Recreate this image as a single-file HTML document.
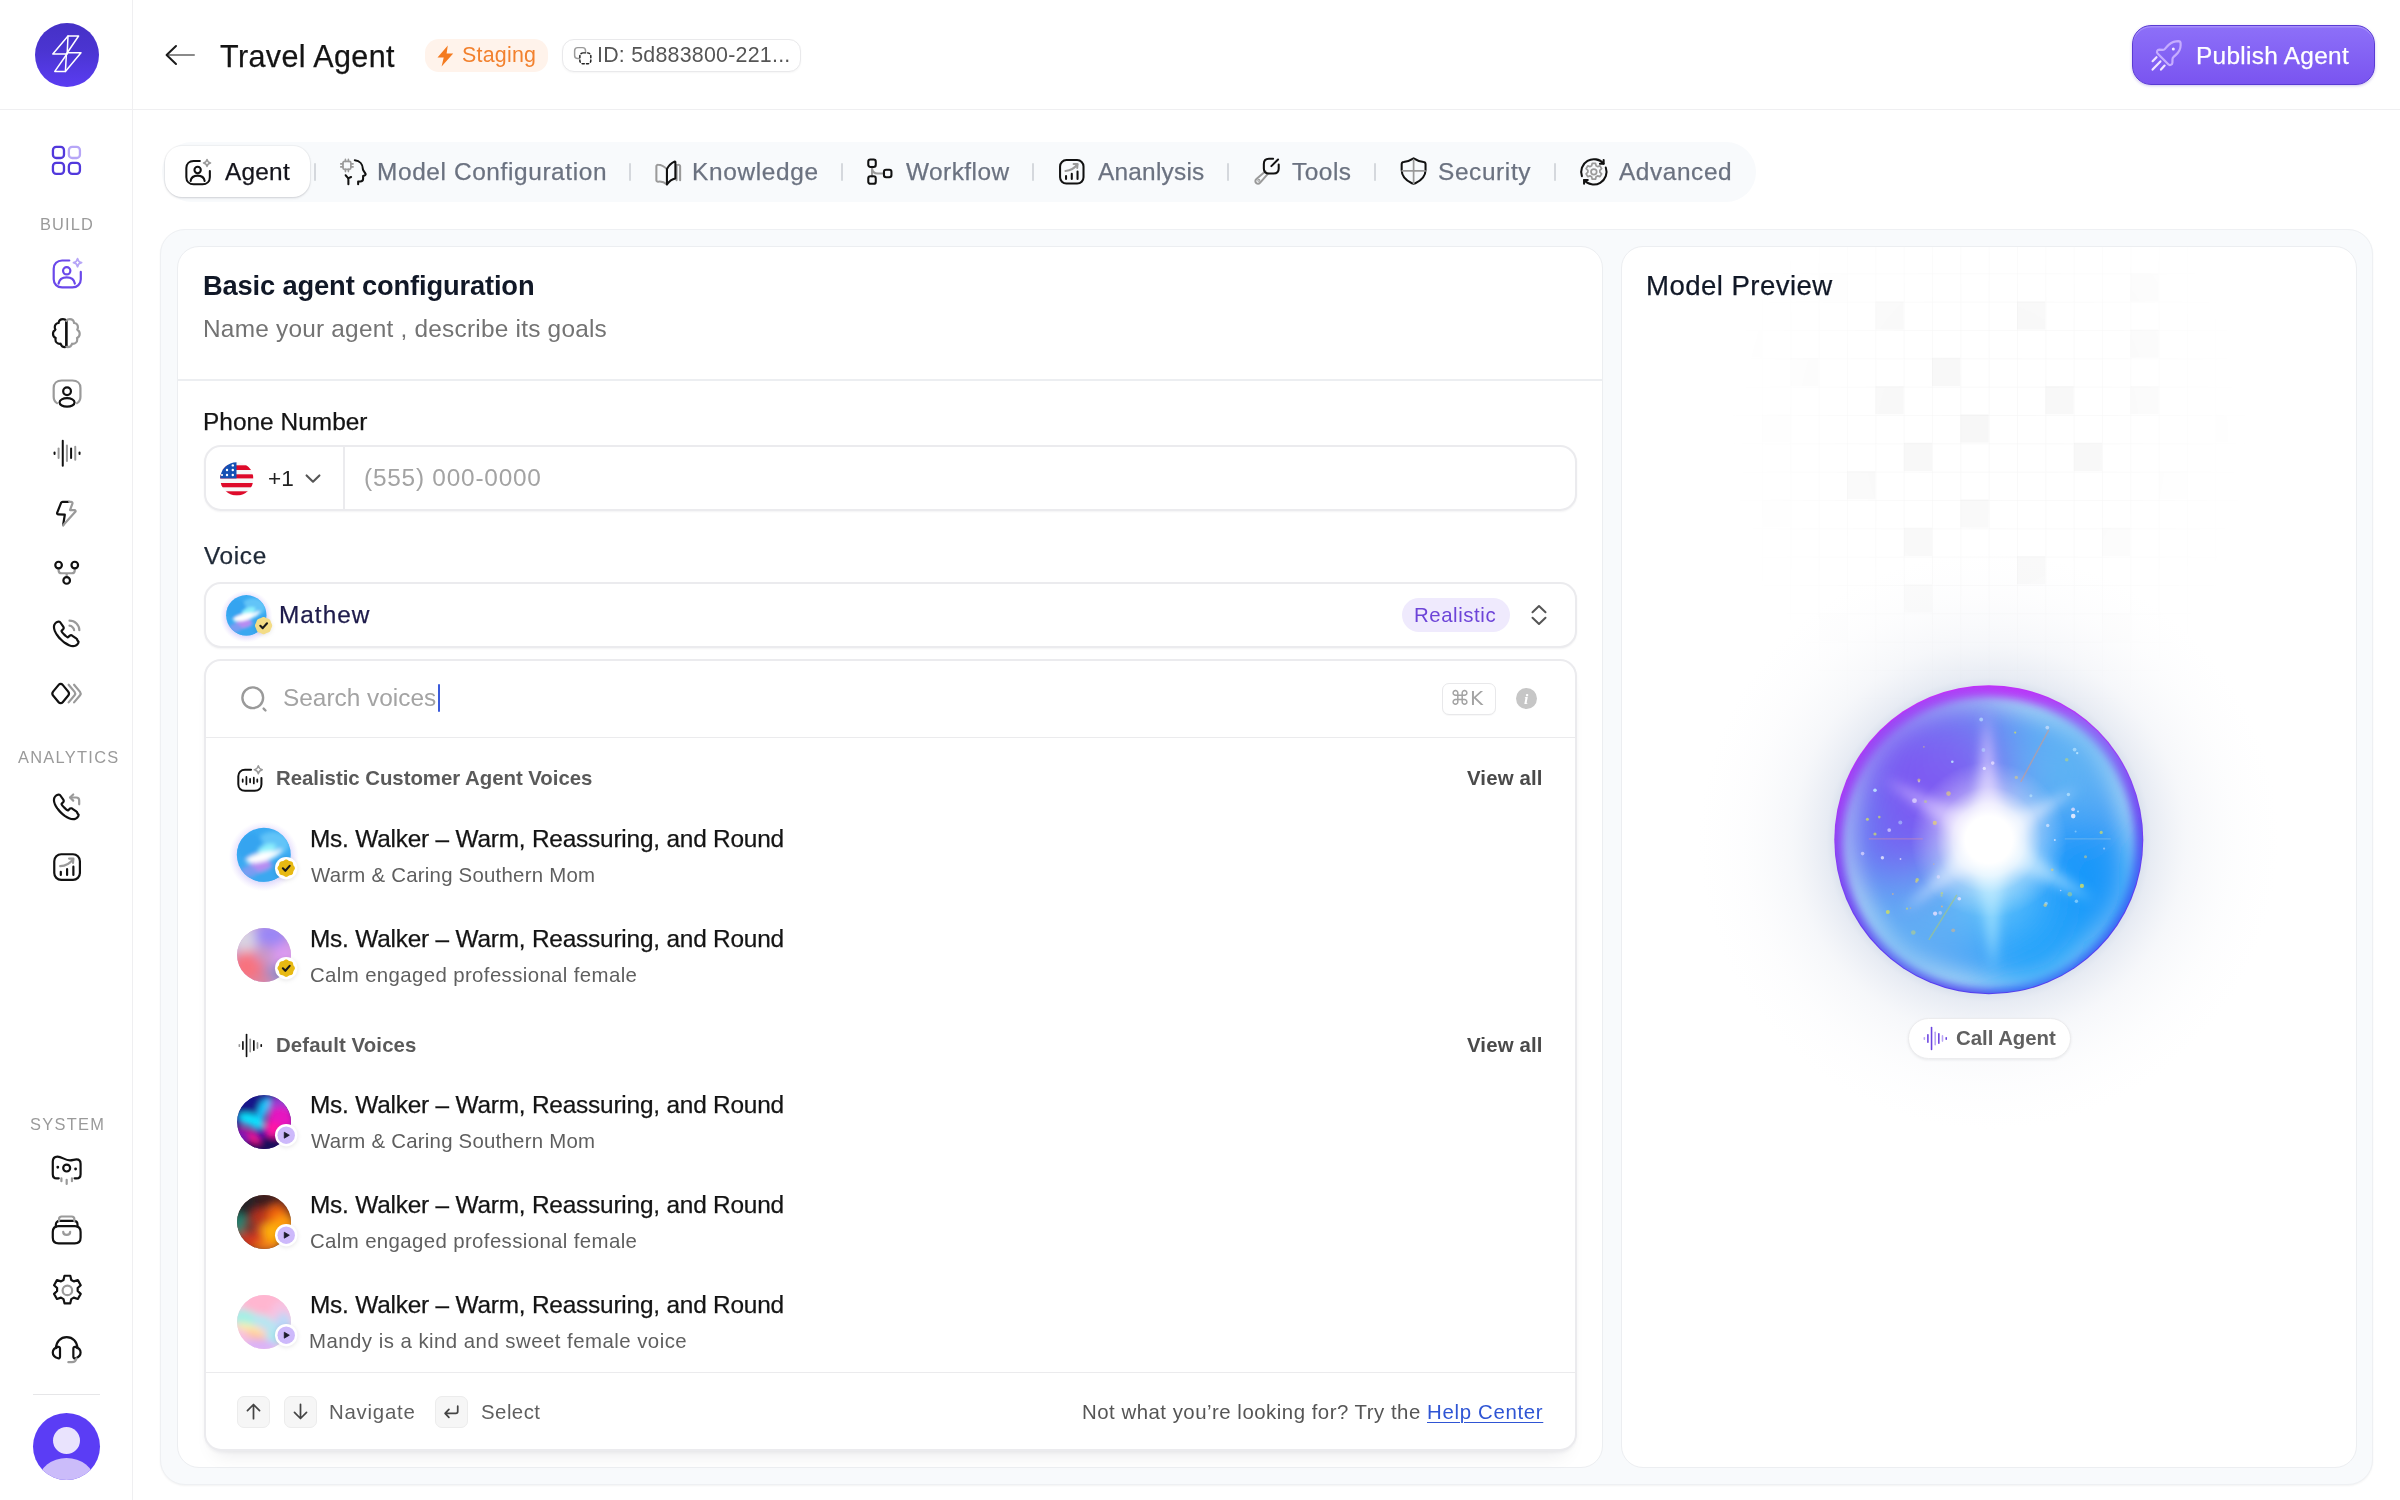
<!DOCTYPE html>
<html lang="en">
<head>
<meta charset="utf-8">
<title>Travel Agent</title>
<style>
*{box-sizing:border-box;margin:0;padding:0}
html,body{width:2400px;height:1500px;overflow:hidden;background:#fff}
body{position:relative;font-family:"Liberation Sans",sans-serif;-webkit-font-smoothing:antialiased}
.b{position:absolute}
.ic{position:absolute;overflow:visible}
.t{position:absolute;white-space:nowrap;line-height:1;display:block;will-change:transform}
</style>
</head>
<body>
<div class="b" style="left:0.0px;top:108.5px;width:2400.0px;height:1.8px;background:#efeff1"></div>
<div class="b" style="left:131.6px;top:0.0px;width:1.8px;height:1500.0px;background:#efeff1"></div>
<nav>
<div class="b" style="left:34.8px;top:22.8px;width:64.0px;height:64.0px;border-radius:50%;background:linear-gradient(180deg,#4531c6 0%,#4b35d2 45%,#5a3cf2 100%);"></div>
<svg class="ic" style="left:34.800px;top:22.800px" width="64" height="64" viewBox="34.800 22.800 64 64" fill="none" stroke="#fff" stroke-width="1.5" stroke-linejoin="round" stroke-linecap="round"><path d="M67.800 35.800H78.400L66.200 53.800H52.600z"/><path d="M67.600 52.600H80.800L65.200 71.200H54.600z"/><path d="M67.800 35.800L67 53.400M66.200 53.800L65.200 71.200"/></svg>
<svg class="ic" style="left:51.37px;top:144.67px" width="30.86" height="30.86" viewBox="0 0 24 24" fill="none" stroke="#5138dc" stroke-width="1.789" stroke-linecap="round" stroke-linejoin="round"><rect x="1.5" y="1.5" width="8.6" height="8.6" rx="2.6"/><rect x="13.9" y="1.5" width="8.6" height="8.6" rx="2.6" stroke="#b7a6f7"/><rect x="1.5" y="13.9" width="8.6" height="8.6" rx="2.6"/><rect x="13.9" y="13.9" width="8.6" height="8.6" rx="2.6"/></svg>
<span class="t" id="sb1" style="left:40px;top:216px;font-size:16.4px;letter-spacing:1.115px;color:#9a9a9a;">BUILD</span>
<svg class="ic" style="left:50.59px;top:256.77px" width="32.50" height="32.50" viewBox="0 0 24 24" fill="none" stroke="#6a48ea" stroke-width="1.624" stroke-linecap="round" stroke-linejoin="round"><path d="M13.5 2.6H8.2C4.6 2.6 2 5 2 8.6v7.8C2 20 4.6 22.4 8.2 22.4h7.6c3.6 0 6.2-2.4 6.2-6V11"/><circle cx="11.6" cy="10.2" r="2.7"/><path d="M5.6 19.6c.5-3 2.9-4.6 6-4.6s5.5 1.600 6 4.600"/><path d="M19.600 1.200c.35 1.900 1.100 2.650 3 3-1.900.35-2.650 1.100-3 3-.35-1.900-1.100-2.650-3-3 1.900-.35 2.650-1.100 3-3z" stroke="#b7a6f7" stroke-width="1.3"/></svg>
<svg class="ic" style="left:50.26px;top:317.16px" width="32.69" height="32.69" viewBox="0 0 24 24" fill="none" stroke="#111" stroke-width="1.615" stroke-linecap="round" stroke-linejoin="round"><path d="M12 2.900c-.5-.8-1.400-1.300-2.500-1.300-1.700 0-3 1.200-3.200 2.800-1.600.2-2.800 1.500-2.800 3.200 0 .6.200 1.200.5 1.700-1.100.6-1.800 1.700-1.800 3 0 1.400.8 2.600 2 3.100-.1.300-.2.700-.2 1.100 0 1.800 1.400 3.200 3.200 3.200.2 0 .4 0 .6-.1.400 1.500 1.700 2.500 3.200 2.500.4 0 .7-.1 1-.2z"/><path d="M12 2.900v19"/><path d="M12 2.900c.5-.8 1.400-1.300 2.500-1.300 1.700 0 3 1.200 3.200 2.800 1.600.2 2.800 1.500 2.800 3.200 0 .6-.2 1.200-.5 1.700 1.100.6 1.800 1.700 1.800 3 0 1.400-.8 2.600-2 3.100.1.300.2.700.2 1.100 0 1.800-1.400 3.200-3.200 3.200-.2 0-.4 0-.6-.1-.4 1.500-1.700 2.500-3.200 2.500-.4 0-.7-.1-1-.2" stroke="#9a9a9a"/></svg>
<svg class="ic" style="left:50.74px;top:376.71px" width="32.11" height="32.11" viewBox="0 0 24 24" fill="none" stroke="#111" stroke-width="1.644" stroke-linecap="round" stroke-linejoin="round"><path d="M4.500 19.500C2.900 18.600 2 16.900 2 14.800V8.200C2 4.800 4.400 2.600 8 2.600h8c3.600 0 6 2.200 6 5.600v6.600c0 2.100-.9 3.800-2.500 4.700" stroke="#9a9a9a"/><circle cx="12" cy="10.600" r="2.900"/><ellipse cx="12" cy="19" rx="5.600" ry="3.200"/></svg>
<svg class="ic" style="left:52.75px;top:438.91px" width="28.57" height="28.57" viewBox="0 0 24 24" fill="none" stroke="#111" stroke-width="1.680" stroke-linecap="round" stroke-linejoin="round"><path d="M1.300 11.300v1.400"/><path d="M4.700 8v8" stroke="#9a9a9a"/><path d="M8.200 1.500v21"/><path d="M11.700 5.500v13" stroke="#9a9a9a"/><path d="M15.200 8v8"/><path d="M18.700 6.500v11" stroke="#9a9a9a"/><path d="M22.300 11.300v1.400"/></svg>
<svg class="ic" style="left:52.36px;top:498.69px" width="29.01" height="29.01" viewBox="0 0 24 24" fill="none" stroke="#111" stroke-width="1.820" stroke-linecap="round" stroke-linejoin="round"><path d="M14.200 2.300c-1.800 0-4.400 0-5.400 0-.6 0-1 .3-1.300.900L4.300 11.300c-.3.800.2 1.500 1 1.500l5.300.2-1.400 8.700"/><path d="M9.200 21.700L19.300 10.600c.5-.6.100-1.400-.7-1.400h-3.700l2-5.400c.3-.8-.300-1.500-1.100-1.500h-1.600" stroke="#9a9a9a"/></svg>
<svg class="ic" style="left:53.12px;top:559.36px" width="27.36" height="27.36" viewBox="0 0 24 24" fill="none" stroke="#111" stroke-width="1.930" stroke-linecap="round" stroke-linejoin="round"><path d="M4.900 8.300v1.500c0 1.700 1 2.700 2.700 2.700h8.800c1.700 0 2.700-1 2.700-2.700V8.300M12 12.500v3.300" stroke="#9a9a9a"/><circle cx="4.900" cy="5.300" r="2.900"/><circle cx="19.100" cy="5.300" r="2.900"/><circle cx="12" cy="18.800" r="2.900"/></svg>
<svg class="ic" style="left:53.35px;top:619.59px" width="28.49" height="28.49" viewBox="0 0 24 24" fill="none" stroke="#111" stroke-width="1.854" stroke-linecap="round" stroke-linejoin="round"><path d="M21.500 18.300c0 .4-.1.700-.2 1.100-.2.400-.4.700-.7 1-.5.600-1.100 1-1.700 1.200-.6.300-1.300.4-2 .4-1.100 0-2.200-.3-3.400-.8s-2.400-1.200-3.600-2c-1.200-.9-2.300-1.800-3.400-2.900C5.400 15.200 4.500 14 3.600 12.900c-.8-1.200-1.500-2.400-2-3.500C1.100 8.200.8 7 .8 6c0-.7.100-1.400.4-2 .2-.6.600-1.200 1.200-1.700C3.100 1.600 3.800 1.300 4.600 1.300c.3 0 .6.100.9.200.3.100.5.300.7.600l2.300 3.300c.2.300.3.500.4.700.1.200.1.400.1.600 0 .200-.1.500-.2.700-.1.200-.3.500-.6.700l-.8.800c-.1.100-.2.200-.2.400 0 .1 0 .2.100.3.100.3.400.7.800 1.200.4.500.9 1 1.400 1.500.5.500 1 1 1.500 1.400.5.400.9.700 1.200.8.100 0 .2.100.3.100.2 0 .3-.1.400-.2l.8-.8c.3-.3.500-.5.700-.6.200-.1.500-.2.700-.2.200 0 .400 0 .6.100.2.100.5.200.7.400l3.400 2.400c.3.200.4.400.5.600.100.300.200.500.200.800z"/><path d="M17.800 8.600c0-.7-.5-1.700-1.300-2.500-.7-.8-1.700-1.300-2.600-1.300" stroke="#9a9a9a"/><path d="M22.200 8.600c0-4.400-3.600-8-8.300-8" stroke="#9a9a9a"/></svg>
<svg class="ic" style="left:51.30px;top:677.75px" width="31.11" height="31.11" viewBox="0 0 24 24" fill="none" stroke="#111" stroke-width="1.697" stroke-linecap="round" stroke-linejoin="round"><path d="M9 5.300L13.300 10.500c.7.900.7 2.100 0 3L9 18.700c-.8 1-2.300 1-3.100 0L1.600 13.500c-.7-.9-.7-2.100 0-3L5.900 5.300c.8-1 2.300-1 3.100 0z"/><path d="M13.600 5.200l4.600 5.500c.6.800.6 1.800 0 2.600l-4.600 5.500" stroke="#9a9a9a"/><path d="M17.800 5.200l4.600 5.500c.6.800.6 1.800 0 2.600l-4.600 5.500" stroke="#9a9a9a"/></svg>
<span class="t" id="sb2" style="left:18px;top:749px;font-size:16.4px;letter-spacing:1.296px;color:#9a9a9a;">ANALYTICS</span>
<svg class="ic" style="left:53.23px;top:792.59px" width="28.57" height="28.57" viewBox="0 0 24 24" fill="none" stroke="#111" stroke-width="1.848" stroke-linecap="round" stroke-linejoin="round"><path d="M21.500 18.300c0 .4-.1.700-.2 1.100-.2.400-.4.700-.7 1-.5.600-1.100 1-1.700 1.200-.6.300-1.300.4-2 .4-1.100 0-2.200-.3-3.400-.8s-2.400-1.200-3.600-2c-1.200-.9-2.300-1.800-3.400-2.900C5.400 15.200 4.500 14 3.600 12.900c-.8-1.200-1.500-2.400-2-3.500C1.100 8.200.8 7 .8 6c0-.7.100-1.400.4-2 .2-.6.600-1.200 1.200-1.700C3.100 1.600 3.800 1.300 4.600 1.300c.3 0 .6.100.9.200.3.100.5.300.7.600l2.300 3.300c.2.300.3.500.4.700.1.200.1.400.1.600 0 .200-.1.500-.2.700-.1.200-.3.500-.6.700l-.8.800c-.1.100-.2.200-.2.400 0 .1 0 .2.100.3.100.3.400.7.800 1.200.4.500.9 1 1.400 1.500.5.500 1 1 1.500 1.400.5.400.9.700 1.200.8.100 0 .2.100.3.100.2 0 .3-.1.400-.2l.8-.8c.3-.3.500-.5.700-.6.200-.1.500-.2.700-.2.200 0 .400 0 .6.100.2.100.5.200.7.400l3.400 2.400c.3.200.4.400.5.600.100.300.200.500.200.800z"/><path d="M22 9.500V6.300c0-1.400-1.100-2.500-2.500-2.500H14.500" stroke="#9a9a9a"/><path d="M17 1.200l-2.700 2.600L17 6.400" stroke="#9a9a9a"/></svg>
<svg class="ic" style="left:51.81px;top:851.66px" width="30.18" height="30.18" viewBox="0 0 24 24" fill="none" stroke="#111" stroke-width="1.750" stroke-linecap="round" stroke-linejoin="round"><rect x="1.800" y="1.800" width="20.400" height="20.400" rx="5.500"/><path d="M7 18.300v-2.600M12 18.300v-4.600M17 18.300v-6.600"/><path d="M6.500 11.300c4.200-.3 8-2.400 10.300-5.700" stroke="#9a9a9a"/><path d="M13.600 5.200l3.400.1-.300 3.300" stroke="#9a9a9a"/></svg>
<span class="t" id="sb3" style="left:30px;top:1116px;font-size:16.4px;letter-spacing:1.290px;color:#9a9a9a;">SYSTEM</span>
<svg class="ic" style="left:50.11px;top:1152.69px" width="33.37" height="33.37" viewBox="0 0 24 24" fill="none" stroke="#111" stroke-width="1.582" stroke-linecap="round" stroke-linejoin="round"><path d="M6.300 18.200c-.4 0-.9 0-1.400 0C3.100 18.200 2 17 2 15.200V6.200C2 4 3.300 2.600 5.400 2.600c3.200 0 5.200 2.700 9 2.700 2 0 3-.7 4.600-.7 1.800 0 3 1.300 3 3.200v7.400c0 1.800-1.100 3-2.900 3-.5 0-.9 0-1.400 0"/><circle cx="12" cy="10.800" r="2.500"/><path d="M5.600 10.100v.2M18.400 11.400v.2" stroke-width="2"/><path d="M8.200 18.300v2M12 19.300v3M15.800 18.300v2" stroke="#9a9a9a"/></svg>
<svg class="ic" style="left:50.11px;top:1212.83px" width="33.39" height="33.39" viewBox="0 0 24 24" fill="none" stroke="#111" stroke-width="1.581" stroke-linecap="round" stroke-linejoin="round"><path d="M6.200 9.500h11.600c2.600 0 4.200 1.600 4.200 4.200v4c0 2.600-1.600 4.200-4.200 4.200H6.200C3.600 21.900 2 20.300 2 17.700v-4c0-2.600 1.600-4.200 4.200-4.200z"/><path d="M4.200 10V8.400c0-1.600 1-2.700 2.700-2.700h10.200c1.700 0 2.700 1.100 2.700 2.700V10"/><path d="M6.500 5.700V4.400c0-1.100.8-1.900 1.900-1.900h7.200c1.100 0 1.900.8 1.900 1.900v1.300" stroke="#9a9a9a"/><path d="M9.500 13.500c0 1.400 1.100 2.300 2.500 2.300s2.500-.900 2.500-2.300" stroke="#9a9a9a"/></svg>
<svg class="ic" style="left:49.51px;top:1273.38px" width="34.79" height="34.79" viewBox="0 0 24 24" fill="none" stroke="#111" stroke-width="1.518" stroke-linecap="round" stroke-linejoin="round"><circle cx="12" cy="12" r="3.300" stroke="#9a9a9a"/><path d="M10 1.900h4l.7 2.900 1.700 1 2.800-.9 2 3.500-2.100 2v2l2.100 2-2 3.500-2.800-.9-1.700 1-.7 2.900h-4l-.7-2.900-1.700-1-2.800.9-2-3.500 2.100-2v-2l-2.100-2 2-3.500 2.800.9 1.700-1z" stroke-linejoin="round"/></svg>
<svg class="ic" style="left:50.11px;top:1332.34px" width="33.37" height="33.37" viewBox="0 0 24 24" fill="none" stroke="#111" stroke-width="1.582" stroke-linecap="round" stroke-linejoin="round"><path d="M4.3 11.6C4.4 7 7.6 3.7 12 3.7s7.600 3.300 7.700 7.900"/><path d="M5.8 10.7c-2.200.6-3.800 2.200-3.800 4.100s1.600 3.500 3.800 4.100c.7.200 1.400-.3 1.400-1.100v-6c0-.8-.7-1.300-1.400-1.100zM18.200 10.700c2.200.6 3.800 2.200 3.800 4.100s-1.600 3.500-3.800 4.100c-.7.200-1.400-.3-1.400-1.100v-6c0-.8.700-1.300 1.400-1.100z"/><path d="M19 18.900c0 1.700-1.400 2.800-3.200 2.800h-2.600" stroke="#9a9a9a"/></svg>
<div class="b" style="left:33.0px;top:1393.5px;width:67.0px;height:1.0px;background:#e6e6e8"></div>
<div class="b" style="left:33.0px;top:1413.0px;width:67.0px;height:67.0px;border-radius:50%;background:#5b3df5;overflow:hidden;"><div style="position:absolute;left:19.500px;top:13.500px;width:27px;height:27px;border-radius:50%;background:#e9e3fd"></div><div style="position:absolute;left:6px;top:45px;width:55px;height:44px;border-radius:50%;background:#cbbcfa"></div></div>
</nav>
<header>
<svg class="ic" style="left:160px;top:40px" width="40" height="30" viewBox="160 40 40 30" fill="none" stroke-linecap="round" stroke-linejoin="round" stroke-width="2"><path d="M168.500 55H194" stroke="#8a8a8a"/><path d="M176 46L166.600 55L176 64" stroke="#1a1a1a"/></svg>
<span class="t" id="h1" style="left:220px;top:41px;font-size:30.5px;letter-spacing:0.407px;color:#141414;-webkit-text-stroke:0.25px currentColor;">Travel Agent</span>
<div class="b" style="left:425.0px;top:38.5px;width:123.0px;height:33.0px;border-radius:14px;background:#fff3eb;"></div>
<svg class="ic" style="left:435.500px;top:44.500px" width="19" height="22" viewBox="0 0 19 22"><path d="M11.800 0.500L1.500 12.400h6.200L5.600 21.500l11.600-13H10.600z" fill="#f47b20"/></svg>
<span class="t" id="h2" style="left:462px;top:45px;font-size:21.4px;letter-spacing:0.232px;color:#f2812e;">Staging</span>
<div class="b" style="left:562.0px;top:38.5px;width:239.0px;height:33.0px;border-radius:12px;background:#fff;border:1.5px solid #e9e9eb;box-shadow:0 1px 2px rgba(0,0,0,.04);"></div>
<svg class="ic" style="left:571.5px;top:44.5px" width="21" height="21" viewBox="0 0 24 24" fill="none" stroke="#111" stroke-width="1.7" stroke-linecap="round" stroke-linejoin="round" ><path d="M15.500 8.200V6.500c0-2.200-1.300-3.500-3.500-3.500H6.500C4.300 3 3 4.300 3 6.500V12c0 2.200 1.300 3.500 3.500 3.500h1.700" stroke="#9a9a9a"/><rect x="9" y="9" width="12.500" height="12.500" rx="3.600" stroke="#222" stroke-dasharray="2.600 2.500"/></svg>
<span class="t" id="h3" style="left:597px;top:45px;font-size:21.4px;letter-spacing:0.232px;color:#555;">ID: 5d883800-221...</span>
<div class="b" style="left:2132.0px;top:25.0px;width:242.7px;height:59.7px;border-radius:19px;background:linear-gradient(180deg,#8d70f8 0%,#7a54f0 100%);border:1.5px solid #5a3bd4;box-shadow:inset 0 1.5px 0 rgba(255,255,255,.22),0 1px 3px rgba(90,60,200,.3);"></div>
<svg class="ic" style="left:2148px;top:36px" width="38" height="38" viewBox="2148 36 38 38" fill="none" stroke-linecap="round" stroke-linejoin="round" stroke-width="2.2"><path d="M2176 41.3C2173 41.5 2169.5 43.5 2166.8 46.8L2165 48.9C2164.5 49.5 2163.8 49.8 2163 49.8L2159.3 49.7C2157.3 49.7 2156.2 51.9 2157.6 53.4L2168.3 64.3C2169.8 65.8 2172.3 64.8 2172.4 62.7L2172.5 59.2C2172.5 58.3 2172.9 57.5 2173.6 56.9L2175.6 55.1C2178.8 52.3 2180.6 48.8 2180.6 45.5L2180.6 43.5C2180.6 42.2 2179.5 41.2 2178.2 41.2Z" stroke="#c6adff"/><circle cx="2173.3" cy="48.9" r="1.5" fill="#f3e8ff" stroke="none"/><path d="M2156.5 57.2L2152.6 61.2M2160.4 61.4L2152.6 69.6M2164.6 65.6L2161 69.6" stroke="#f1e4ff"/></svg>
<span class="t" id="h4" style="left:2196px;top:44px;font-size:24.4px;letter-spacing:0.293px;color:#fff;-webkit-text-stroke:0.25px currentColor;">Publish Agent</span>
</header>
<section>
<div class="b" style="left:162.0px;top:142.0px;width:1594.0px;height:59.5px;border-radius:30px;background:#f8fafc;"></div>
<div class="b" style="left:165.0px;top:146.0px;width:145.0px;height:51.0px;border-radius:17px;background:#fff;box-shadow:0 1px 3px rgba(16,24,40,.10),0 1px 2px rgba(16,24,40,.06),0 0 0 1px rgba(16,24,40,.03);"></div>
<svg class="ic" style="left:183.85px;top:158.04px" width="28.20" height="28.20" viewBox="0 0 24 24" fill="none" stroke="#111" stroke-width="1.745" stroke-linecap="round" stroke-linejoin="round"><path d="M13.5 2.6H8.2C4.6 2.6 2 5 2 8.6v7.8C2 20 4.6 22.4 8.2 22.4h7.6c3.6 0 6.2-2.4 6.2-6V11"/><circle cx="11.6" cy="10.2" r="2.7"/><path d="M5.6 19.6c.5-3 2.9-4.6 6-4.6s5.5 1.600 6 4.600"/><path d="M19.600 1.200c.35 1.900 1.100 2.650 3 3-1.900.35-2.650 1.100-3 3-.35-1.900-1.100-2.650-3-3 1.900-.35 2.650-1.100 3-3z" stroke="#9a9a9a" stroke-width="1.3"/></svg>
<span class="t" id="tab0" style="left:225px;top:160px;font-size:24.4px;letter-spacing:0.238px;color:#14141c;-webkit-text-stroke:0.25px currentColor;">Agent</span>
<svg class="ic" style="left:339.30px;top:156.99px" width="29.66" height="29.66" viewBox="0 0 24 24" fill="none" stroke="#111" stroke-width="1.659" stroke-linecap="round" stroke-linejoin="round"><path d="M12.800 2.600c4 .5 6.500 3.400 6.500 7 0 .7.300 1.200.8 1.900l1.300 1.900c.4.600.1 1.300-.6 1.500l-1.300.4v2.300c0 1.300-1 2.200-2.300 2.200h-1.700v2.200"/><path d="M7.600 22v-3.600c0-.8-.3-1.500-.9-2.100-.5-.5-1-.900-1.300-1.500M7.300 17.300l2.500-1.100"/><rect x="3.200" y="3.600" width="6.400" height="6.400" rx="1.300" stroke="#9a9a9a" stroke-width="1.400"/><path d="M5.200 1.800v1.800M7.600 1.800v1.800M5.200 10v1.800M7.600 10v1.800M1.400 5.600h1.800M1.400 8h1.800M9.600 5.600h1.800M9.600 8h1.800" stroke="#9a9a9a" stroke-width="1.300"/></svg>
<span class="t" id="tab1" style="left:377px;top:160px;font-size:24.4px;letter-spacing:0.623px;color:#6b7280;-webkit-text-stroke:0.25px currentColor;">Model Configuration</span>
<svg class="ic" style="left:654.05px;top:158.92px" width="28.51" height="28.51" viewBox="0 0 24 24" fill="none" stroke="#111" stroke-width="1.726" stroke-linecap="round" stroke-linejoin="round"><path d="M2 6.200v11.600c0 .8.700 1.400 1.500 1.300 2.200-.3 5 .2 7.400 2.300V8.500C8.500 6.300 5.700 5 3.500 4.900 2.700 4.800 2 5.400 2 6.200z" stroke="#9a9a9a"/><path d="M22 17.800V6.200c0-.8-.7-1.400-1.500-1.300-.5 0-1 .1-1.500.2v12.700" stroke="#9a9a9a"/><path d="M10.900 8.500c1.300-2.800 3.600-5 6.300-6.300.4-.2.800.1.800.5v13.700c-2.800.500-5.300 2.400-7.100 5z"/></svg>
<span class="t" id="tab2" style="left:692px;top:160px;font-size:24.4px;letter-spacing:0.685px;color:#6b7280;-webkit-text-stroke:0.25px currentColor;">Knowledge</span>
<svg class="ic" style="left:866.29px;top:158.02px" width="27.27" height="27.27" viewBox="0 0 24 24" fill="none" stroke="#111" stroke-width="1.804" stroke-linecap="round" stroke-linejoin="round"><path d="M5.300 7.700v8.600M5.300 8.500c0 3.300 2 5.100 5.300 5.100H16" stroke="#9a9a9a"/><rect x="2" y="1.300" width="6.600" height="6.600" rx="1.900"/><rect x="2" y="16.100" width="6.600" height="6.600" rx="1.900"/><rect x="15.800" y="10.300" width="6.600" height="6.600" rx="1.900"/></svg>
<span class="t" id="tab3" style="left:906px;top:160px;font-size:24.4px;letter-spacing:0.477px;color:#6b7280;-webkit-text-stroke:0.25px currentColor;">Workflow</span>
<svg class="ic" style="left:1058.11px;top:157.71px" width="27.59" height="27.59" viewBox="0 0 24 24" fill="none" stroke="#111" stroke-width="1.783" stroke-linecap="round" stroke-linejoin="round"><rect x="1.800" y="1.800" width="20.400" height="20.400" rx="5.500"/><path d="M7 18.300v-2.600M12 18.300v-4.600M17 18.300v-6.600"/><path d="M6.500 11.300c4.200-.3 8-2.400 10.300-5.700" stroke="#9a9a9a"/><path d="M13.600 5.200l3.400.1-.300 3.300" stroke="#9a9a9a"/></svg>
<span class="t" id="tab4" style="left:1098px;top:160px;font-size:24.4px;letter-spacing:0.230px;color:#6b7280;-webkit-text-stroke:0.25px currentColor;">Ananlysis</span>
<svg class="ic" style="left:1253.06px;top:157.37px" width="27.43" height="27.43" viewBox="0 0 24 24" fill="none" stroke="#111" stroke-width="1.794" stroke-linecap="round" stroke-linejoin="round"><path d="M10.9 12.5L3 19.2c-1.200 1-1.200 2.600-.2 3.500 1 .9 2.500.8 3.500-.3l6.700-7.600" stroke="#9a9a9a"/><circle cx="5.1" cy="20.3" r=".45" stroke="#9a9a9a"/><path d="M17.600 1.600h-3.600c-2.800 0-4.500 1.700-4.500 4.500v3.900c0 2.800 1.700 4.500 4.500 4.500h4c2.800 0 4.500-1.700 4.500-4.500V6.600"/><path d="M21.900 2.200l-5.800 5.800"/></svg>
<span class="t" id="tab5" style="left:1292px;top:160px;font-size:24.4px;letter-spacing:0.529px;color:#6b7280;-webkit-text-stroke:0.25px currentColor;">Tools</span>
<svg class="ic" style="left:1398.83px;top:156.42px" width="29.23" height="29.23" viewBox="0 0 24 24" fill="none" stroke="#111" stroke-width="1.683" stroke-linecap="round" stroke-linejoin="round"><path d="M12 1.900c-2.400 1.600-5.500 2.600-8.200 3-.9.100-1.600.9-1.600 1.800v4.800c0 5.300 3.500 8.600 8.400 10.900.9.400 1.900.4 2.800 0 4.900-2.300 8.400-5.600 8.400-10.900V6.700c0-.9-.7-1.700-1.600-1.800-2.700-.4-5.800-1.400-8.200-3z"/><path d="M12 2.900v19.400M2.600 12.300h18.800" stroke="#9a9a9a" stroke-width="1.4"/></svg>
<span class="t" id="tab6" style="left:1438px;top:160px;font-size:24.4px;letter-spacing:0.631px;color:#6b7280;-webkit-text-stroke:0.25px currentColor;">Security</span>
<svg class="ic" style="left:1577.54px;top:155.54px" width="31.72" height="31.72" viewBox="0 0 24 24" fill="none" stroke="#111" stroke-width="1.551" stroke-linecap="round" stroke-linejoin="round"><path d="M2.98 15.28A9.6 9.6 0 0 1 19.35 5.83M21.02 8.72A9.6 9.6 0 0 1 4.65 18.17" stroke-width="1.55"/><path d="M4.6 21v-2.800h2.800M19.400 3v2.800h-2.800" stroke-width="1.55"/><g transform="translate(12 12) scale(1.13) translate(-12 -12)" stroke="#9a9a9a" stroke-width="1.15"><circle cx="12" cy="12" r="1.900"/><path d="M10.900 6.300h2.200l.4 1.600 1 .6 1.600-.5 1.100 1.900-1.200 1.100v1.200l1.200 1.100-1.100 1.900-1.600-.5-1 .6-.4 1.600h-2.200l-.4-1.600-1-.6-1.600.5-1.100-1.900 1.200-1.100v-1.200L6.800 9.900l1.100-1.900 1.600.5 1-.6z"/></g></svg>
<span class="t" id="tab7" style="left:1619px;top:160px;font-size:24.4px;letter-spacing:0.589px;color:#6b7280;-webkit-text-stroke:0.25px currentColor;">Advanced</span>
<div class="b" style="left:314.0px;top:162.5px;width:2.0px;height:18.5px;background:#d5d8dd;border-radius:1px"></div>
<div class="b" style="left:629.0px;top:162.5px;width:2.0px;height:18.5px;background:#d5d8dd;border-radius:1px"></div>
<div class="b" style="left:840.5px;top:162.5px;width:2.0px;height:18.5px;background:#d5d8dd;border-radius:1px"></div>
<div class="b" style="left:1032.0px;top:162.5px;width:2.0px;height:18.5px;background:#d5d8dd;border-radius:1px"></div>
<div class="b" style="left:1227.0px;top:162.5px;width:2.0px;height:18.5px;background:#d5d8dd;border-radius:1px"></div>
<div class="b" style="left:1373.6px;top:162.5px;width:2.0px;height:18.5px;background:#d5d8dd;border-radius:1px"></div>
<div class="b" style="left:1554.0px;top:162.5px;width:2.0px;height:18.5px;background:#d5d8dd;border-radius:1px"></div>
</section>
<main>
<div class="b" style="left:160.0px;top:229.0px;width:2213.0px;height:1256.0px;border-radius:25px;background:#f8fafc;border:1.5px solid #eef0f3;box-shadow:0 1px 2px rgba(0,0,0,.05);"></div>
<div class="b" style="left:177.0px;top:245.5px;width:1426.0px;height:1222.5px;border-radius:22px;background:#fff;border:1.5px solid #eceef1;"></div>
<div class="b" style="left:1621.0px;top:245.5px;width:735.5px;height:1222.5px;border-radius:22px;background:#fff;border:1.5px solid #eceef1;overflow:hidden"></div>
<span class="t" id="c1" style="left:203px;top:272px;font-size:27.3px;letter-spacing:-0.151px;color:#111827;font-weight:700;">Basic agent configuration</span>
<span class="t" id="c2" style="left:203px;top:317px;font-size:24.4px;letter-spacing:0.227px;color:#737373;">Name your agent , describe its goals</span>
<div class="b" style="left:178.0px;top:379.0px;width:1424.0px;height:1.5px;background:#eceef1"></div>
<span class="t" id="c3" style="left:203px;top:410px;font-size:24.4px;letter-spacing:0.036px;color:#141414;-webkit-text-stroke:0.25px currentColor;">Phone Number</span>
<div class="b" style="left:204.0px;top:445.0px;width:1372.5px;height:66.0px;border-radius:17px;background:#fff;border:2px solid #ebebee;box-shadow:0 1px 2px rgba(16,24,40,.05);"></div>
<div class="b" style="left:343.2px;top:447.0px;width:2.0px;height:62.0px;background:#ebebee"></div>
<svg class="ic" style="left:219.9px;top:461.6px" width="33.6" height="33.6" viewBox="0 0 33.6 33.6"><defs><clipPath id="fc"><circle cx="16.8" cy="16.8" r="16.6"/></clipPath></defs>
<g clip-path="url(#fc)"><rect width="33.6" height="33.6" fill="#f7f7f7"/>
<g fill="#de0a2a"><rect y="3.3" width="33.6" height="4.7"/><rect y="12.3" width="33.6" height="4.1"/><rect y="21" width="33.6" height="4.3"/><rect y="29.3" width="33.6" height="4.3"/></g>
<rect width="16.5" height="16.4" fill="#1450b4"/>
<g fill="#fff"><circle cx="12.8" cy="3.4" r="1.2"/><circle cx="7" cy="8" r="1.2"/><circle cx="12.8" cy="8" r="1.2"/><circle cx="7" cy="13" r="1.2"/><circle cx="12.8" cy="13" r="1.2"/><circle cx="2" cy="13" r="1.1"/></g></g></svg>
<span class="t" id="c4" style="left:268px;top:468px;font-size:22.6px;letter-spacing:0.000px;color:#222;">+1</span>
<svg class="ic" style="left:302.2px;top:467.2px" width="22" height="22" viewBox="0 0 24 24" fill="none" stroke="#555" stroke-width="2.3" stroke-linecap="round" stroke-linejoin="round" ><path d="M5 9.2l7 6.8 7-6.8"/></svg>
<span class="t" id="c5" style="left:364px;top:466px;font-size:24.4px;letter-spacing:0.776px;color:#a3a3a3;">(555) 000-0000</span>
<span class="t" id="c6" style="left:204px;top:544px;font-size:24.4px;letter-spacing:0.639px;color:#1f2937;-webkit-text-stroke:0.25px currentColor;">Voice</span>
<div class="b" style="left:204.0px;top:582.0px;width:1372.5px;height:65.5px;border-radius:17px;background:#fff;border:2px solid #ebebee;box-shadow:0 1px 2px rgba(16,24,40,.05);"></div>
<svg class="ic" style="left:218.2px;top:586.7px" width="56.6" height="56.6" viewBox="-28.3 -28.3 56.6 56.6"><defs><filter id="osb" x="-50%" y="-50%" width="200%" height="200%"><feGaussianBlur stdDeviation="1.72"/></filter><clipPath id="osc"><circle cx="0" cy="0" r="20.2"/></clipPath><radialGradient id="osh" cx="50%" cy="50%" r="50%"><stop offset=".62" stop-color="#8fb4f6" stop-opacity=".6"/><stop offset=".8" stop-color="#b9a8f8" stop-opacity=".3"/><stop offset="1" stop-color="#d9c8fb" stop-opacity="0"/></radialGradient><filter id="ose" x="-50%" y="-50%" width="200%" height="200%"><feGaussianBlur stdDeviation="1.01"/></filter></defs><circle cx="0" cy="1.2" r="26.3" fill="url(#osh)"/><circle cx="0" cy="0" r="20.2" fill="#3aaaf2"/><g clip-path="url(#osc)"><g filter="url(#osb)"><ellipse cx="7.1" cy="-8.1" rx="12.1" ry="9.1" fill="#62c4f8"/><ellipse cx="-10.1" cy="-6.1" rx="10.1" ry="10.1" fill="#34a4f0"/><ellipse cx="0.0" cy="15.1" rx="16.2" ry="7.1" fill="#3aa8f0"/><ellipse cx="-3.0" cy="8.5" rx="9.1" ry="4.0" fill="#b78cf2" transform="rotate(-12 -3.0 8.5)"/><ellipse cx="-11.1" cy="12.5" rx="6.1" ry="4.0" fill="#7a9cf2"/><ellipse cx="2.4" cy="-4.4" rx="7.1" ry="3.2" fill="#8cf0fc" transform="rotate(-20 2.4 -4.4)"/><ellipse cx="-1.0" cy="1.6" rx="12.5" ry="3.4" fill="#ffffff" transform="rotate(-14 -1.0 1.6)"/><ellipse cx="-4.0" cy="2.6" rx="8.1" ry="2.6" fill="#ffffff" transform="rotate(-8 -4.0 2.6)"/><ellipse cx="9.1" cy="-1.6" rx="5.0" ry="1.4" fill="#e8f8ff" transform="rotate(-28 9.1 -1.6)"/></g></g></svg><svg class="ic" style="left:251.3px;top:612.6px;filter:drop-shadow(0 1px 2px rgba(0,0,0,.10))" width="25.2" height="25.2" viewBox="-12.6 -12.6 25.2 25.2"><path d="M8.60,0.00 L8.55,0.56 L8.40,1.11 L8.18,1.63 L7.93,2.13 L7.69,2.61 L7.47,3.09 L7.28,3.59 L7.11,4.11 L6.94,4.63 L6.72,5.16 L6.44,5.65 L6.08,6.08 L5.65,6.44 L5.16,6.72 L4.63,6.94 L4.11,7.11 L3.59,7.28 L3.09,7.47 L2.61,7.69 L2.13,7.93 L1.63,8.18 L1.11,8.40 L0.56,8.55 L0.00,8.60 L-0.56,8.55 L-1.11,8.40 L-1.63,8.18 L-2.13,7.93 L-2.61,7.69 L-3.09,7.47 L-3.59,7.28 L-4.11,7.11 L-4.63,6.94 L-5.16,6.72 L-5.65,6.44 L-6.08,6.08 L-6.44,5.65 L-6.72,5.16 L-6.94,4.63 L-7.11,4.11 L-7.28,3.59 L-7.47,3.09 L-7.69,2.61 L-7.93,2.13 L-8.18,1.63 L-8.40,1.11 L-8.55,0.56 L-8.60,0.00 L-8.55,-0.56 L-8.40,-1.11 L-8.18,-1.63 L-7.93,-2.13 L-7.69,-2.61 L-7.47,-3.09 L-7.28,-3.59 L-7.11,-4.11 L-6.94,-4.63 L-6.72,-5.16 L-6.44,-5.65 L-6.08,-6.08 L-5.65,-6.44 L-5.16,-6.72 L-4.63,-6.94 L-4.11,-7.11 L-3.59,-7.28 L-3.09,-7.47 L-2.61,-7.69 L-2.13,-7.93 L-1.63,-8.18 L-1.11,-8.40 L-0.56,-8.55 L-0.00,-8.60 L0.56,-8.55 L1.11,-8.40 L1.63,-8.18 L2.13,-7.93 L2.61,-7.69 L3.09,-7.47 L3.59,-7.28 L4.11,-7.11 L4.63,-6.94 L5.16,-6.72 L5.65,-6.44 L6.08,-6.08 L6.44,-5.65 L6.72,-5.16 L6.94,-4.63 L7.11,-4.11 L7.28,-3.59 L7.47,-3.09 L7.69,-2.61 L7.93,-2.13 L8.18,-1.63 L8.40,-1.11 L8.55,-0.56z" fill="#f3dc86"/><path d="M-3.27 0.17L-0.86 2.58L3.44 -2.32" fill="none" stroke="#1a1a1a" stroke-width="2.06" stroke-linecap="round" stroke-linejoin="round"/></svg>
<span class="t" id="c7" style="left:279px;top:603px;font-size:24.4px;letter-spacing:0.989px;color:#1e1b4b;-webkit-text-stroke:0.25px currentColor;">Mathew</span>
<div class="b" style="left:1401.5px;top:598.3px;width:108.5px;height:33.4px;border-radius:17px;background:#efeafd;"></div>
<span class="t" id="c8" style="left:1414px;top:605px;font-size:20.4px;letter-spacing:0.568px;color:#6d44d8;">Realistic</span>
<svg class="ic" style="left:1526.5px;top:603.0px" width="24" height="24" viewBox="0 0 24 24" fill="none" stroke="#555" stroke-width="2.0" stroke-linecap="round" stroke-linejoin="round" ><path d="M5.500 9.300L12 3l6.500 6.300M5.500 14.700L12 21l6.500-6.300"/></svg>
<div class="b" style="left:204.0px;top:659.0px;width:1372.5px;height:792.0px;border-radius:17px;background:#fff;border:2px solid #ebebee;box-shadow:0 14px 20px -12px rgba(16,24,40,.10),0 2px 3px rgba(16,24,40,.04);"></div>
<svg class="ic" style="left:238.5px;top:683.5px" width="30" height="30" viewBox="0 0 24 24" fill="none" stroke="#9a9a9a" stroke-width="1.9" stroke-linecap="round" stroke-linejoin="round" ><circle cx="11" cy="11" r="8.300"/><path d="M19.700 19.700l1.500 1.500"/></svg>
<span class="t" id="d1" style="left:283px;top:686px;font-size:24.4px;letter-spacing:0.003px;color:#a3a3a3;">Search voices</span>
<div class="b" style="left:438.3px;top:684.0px;width:2.2px;height:27.5px;background:#3b5bdb;border-radius:1px"></div>
<div class="b" style="left:1442.0px;top:682.5px;width:54.0px;height:32.0px;border-radius:7px;background:#fff;border:1.5px solid #e8e8ea;box-shadow:0 1px 1px rgba(0,0,0,.03);"></div>
<span class="t" id="d2" style="left:1450px;top:688px;font-size:20px;letter-spacing:0.000px;color:#a3a3a3;font-family:'DejaVu Sans','Liberation Sans',sans-serif;">⌘K</span>
<div class="b" style="left:1516.0px;top:688.0px;width:21.0px;height:21.0px;border-radius:50%;background:#c6c6c6;"></div>
<span class="t" id="d3" style="left:1524px;top:691px;font-size:15.5px;letter-spacing:0.000px;color:#fff;font-weight:700;font-family:'Liberation Serif',serif;font-style:italic;">i</span>
<div class="b" style="left:205.0px;top:736.5px;width:1371.0px;height:1.5px;background:#ebebed"></div>
<svg class="ic" style="left:235.66px;top:765.32px" width="27.75" height="27.75" viewBox="0 0 24 24" fill="none" stroke="#111" stroke-width="1.730" stroke-linecap="round" stroke-linejoin="round"><path d="M13 4.200H7.800C4.300 4.200 2 6.400 2 9.800v6.800c0 3.400 2.300 5.600 5.800 5.600h8.400c3.500 0 5.800-2.200 5.800-5.600v-5.300"/><path d="M5.800 12.500v2M9 10.300v6.400M12.200 12v3M15.400 11v5M18.400 12.500v2" stroke-width="1.500"/><path d="M19.300 0.600c.4 2.200 1.300 3.100 3.500 3.500-2.200.4-3.100 1.300-3.500 3.500-.4-2.200-1.300-3.100-3.500-3.500 2.200-.4 3.100-1.300 3.500-3.500z" stroke="#9a9a9a" stroke-width="1.200"/></svg>
<span class="t" id="d4" style="left:276px;top:768px;font-size:20.4px;letter-spacing:-0.031px;color:#5a5a5a;font-weight:700;">Realistic Customer Agent Voices</span>
<span class="t" id="d5" style="left:1467px;top:768px;font-size:20.4px;letter-spacing:0.133px;color:#4a4a4a;font-weight:700;">View all</span>
<svg class="ic" style="left:225.8px;top:817.4px" width="75.6" height="75.6" viewBox="-37.8 -37.8 75.6 75.6"><defs><filter id="oAb" x="-50%" y="-50%" width="200%" height="200%"><feGaussianBlur stdDeviation="2.30"/></filter><clipPath id="oAc"><circle cx="0" cy="0" r="27"/></clipPath><radialGradient id="oAh" cx="50%" cy="50%" r="50%"><stop offset=".62" stop-color="#8fb4f6" stop-opacity=".6"/><stop offset=".8" stop-color="#b9a8f8" stop-opacity=".3"/><stop offset="1" stop-color="#d9c8fb" stop-opacity="0"/></radialGradient><filter id="oAe" x="-50%" y="-50%" width="200%" height="200%"><feGaussianBlur stdDeviation="1.35"/></filter></defs><circle cx="0" cy="1.6" r="35.1" fill="url(#oAh)"/><circle cx="0" cy="0" r="27" fill="#3aaaf2"/><g clip-path="url(#oAc)"><g filter="url(#oAb)"><ellipse cx="9.4" cy="-10.8" rx="16.2" ry="12.2" fill="#62c4f8"/><ellipse cx="-13.5" cy="-8.1" rx="13.5" ry="13.5" fill="#34a4f0"/><ellipse cx="0.0" cy="20.2" rx="21.6" ry="9.4" fill="#3aa8f0"/><ellipse cx="-4.0" cy="11.3" rx="12.2" ry="5.4" fill="#b78cf2" transform="rotate(-12 -4.0 11.3)"/><ellipse cx="-14.9" cy="16.7" rx="8.1" ry="5.4" fill="#7a9cf2"/><ellipse cx="3.2" cy="-5.9" rx="9.4" ry="4.3" fill="#8cf0fc" transform="rotate(-20 3.2 -5.9)"/><ellipse cx="-1.4" cy="2.2" rx="16.7" ry="4.6" fill="#ffffff" transform="rotate(-14 -1.4 2.2)"/><ellipse cx="-5.4" cy="3.5" rx="10.8" ry="3.5" fill="#ffffff" transform="rotate(-8 -5.4 3.5)"/><ellipse cx="12.2" cy="-2.2" rx="6.8" ry="1.9" fill="#e8f8ff" transform="rotate(-28 12.2 -2.2)"/></g></g></svg>
<svg class="ic" style="left:270.8px;top:853.2px;filter:drop-shadow(0 1px 2px rgba(0,0,0,.10))" width="30.4" height="30.4" viewBox="-15.2 -15.2 30.4 30.4"><circle r="11.2" fill="#fff"/><path d="M8.74,0.00 L8.66,0.57 L8.44,1.11 L8.14,1.62 L7.81,2.09 L7.50,2.55 L7.26,3.01 L7.10,3.50 L7.00,4.04 L6.90,4.61 L6.76,5.19 L6.52,5.72 L6.18,6.18 L5.72,6.52 L5.19,6.76 L4.61,6.90 L4.04,7.00 L3.50,7.10 L3.01,7.26 L2.55,7.50 L2.09,7.81 L1.62,8.14 L1.11,8.44 L0.57,8.66 L0.00,8.74 L-0.57,8.66 L-1.11,8.44 L-1.62,8.14 L-2.09,7.81 L-2.55,7.50 L-3.01,7.26 L-3.50,7.10 L-4.04,7.00 L-4.61,6.90 L-5.19,6.76 L-5.72,6.52 L-6.18,6.18 L-6.52,5.72 L-6.76,5.19 L-6.90,4.61 L-7.00,4.04 L-7.10,3.50 L-7.26,3.01 L-7.50,2.55 L-7.81,2.09 L-8.14,1.62 L-8.44,1.11 L-8.66,0.57 L-8.74,0.00 L-8.66,-0.57 L-8.44,-1.11 L-8.14,-1.62 L-7.81,-2.09 L-7.50,-2.55 L-7.26,-3.01 L-7.10,-3.50 L-7.00,-4.04 L-6.90,-4.61 L-6.76,-5.19 L-6.52,-5.72 L-6.18,-6.18 L-5.72,-6.52 L-5.19,-6.76 L-4.61,-6.90 L-4.04,-7.00 L-3.50,-7.10 L-3.01,-7.26 L-2.55,-7.50 L-2.09,-7.81 L-1.62,-8.14 L-1.11,-8.44 L-0.57,-8.66 L-0.00,-8.74 L0.57,-8.66 L1.11,-8.44 L1.62,-8.14 L2.09,-7.81 L2.55,-7.50 L3.01,-7.26 L3.50,-7.10 L4.04,-7.00 L4.61,-6.90 L5.19,-6.76 L5.72,-6.52 L6.18,-6.18 L6.52,-5.72 L6.76,-5.19 L6.90,-4.61 L7.00,-4.04 L7.10,-3.50 L7.26,-3.01 L7.50,-2.55 L7.81,-2.09 L8.14,-1.62 L8.44,-1.11 L8.66,-0.57z" fill="#e7b913"/><path d="M-3.32 0.17L-0.87 2.62L3.49 -2.36" fill="none" stroke="#1a1a1a" stroke-width="2.10" stroke-linecap="round" stroke-linejoin="round"/></svg>
<span class="t" id="it0" style="left:310px;top:827px;font-size:24.4px;letter-spacing:-0.204px;color:#141414;-webkit-text-stroke:0.25px currentColor;">Ms. Walker – Warm, Reassuring, and Round</span>
<span class="t" id="is0" style="left:311px;top:865px;font-size:20.4px;letter-spacing:0.239px;color:#5f5f5f;">Warm &amp; Caring Southern Mom</span>
<svg class="ic" style="left:234.6px;top:926.2px" width="58.0" height="58.0" viewBox="-29.0 -29.0 58.0 58.0"><defs><filter id="oBb" x="-50%" y="-50%" width="200%" height="200%"><feGaussianBlur stdDeviation="5.40"/></filter><clipPath id="oBc"><circle cx="0" cy="0" r="27"/></clipPath></defs><circle cx="0" cy="0" r="27" fill="#c79ad0"/><g clip-path="url(#oBc)"><g filter="url(#oBb)"><ellipse cx="-18.9" cy="-16.2" rx="14.9" ry="13.5" fill="#d9d3e2"/><ellipse cx="6.8" cy="-18.9" rx="16.2" ry="13.5" fill="#9a86f6"/><ellipse cx="20.2" cy="1.4" rx="12.2" ry="13.5" fill="#dc9af0"/><ellipse cx="-14.9" cy="12.2" rx="17.6" ry="16.2" fill="#f8727e"/><ellipse cx="0.0" cy="-1.4" rx="9.4" ry="9.4" fill="#c898c8"/><ellipse cx="9.4" cy="20.2" rx="12.2" ry="10.8" fill="#9890cc"/><ellipse cx="-2.7" cy="25.6" rx="10.8" ry="6.8" fill="#e08098"/></g></g></svg>
<svg class="ic" style="left:270.8px;top:953.2px;filter:drop-shadow(0 1px 2px rgba(0,0,0,.10))" width="30.4" height="30.4" viewBox="-15.2 -15.2 30.4 30.4"><circle r="11.2" fill="#fff"/><path d="M8.74,0.00 L8.66,0.57 L8.44,1.11 L8.14,1.62 L7.81,2.09 L7.50,2.55 L7.26,3.01 L7.10,3.50 L7.00,4.04 L6.90,4.61 L6.76,5.19 L6.52,5.72 L6.18,6.18 L5.72,6.52 L5.19,6.76 L4.61,6.90 L4.04,7.00 L3.50,7.10 L3.01,7.26 L2.55,7.50 L2.09,7.81 L1.62,8.14 L1.11,8.44 L0.57,8.66 L0.00,8.74 L-0.57,8.66 L-1.11,8.44 L-1.62,8.14 L-2.09,7.81 L-2.55,7.50 L-3.01,7.26 L-3.50,7.10 L-4.04,7.00 L-4.61,6.90 L-5.19,6.76 L-5.72,6.52 L-6.18,6.18 L-6.52,5.72 L-6.76,5.19 L-6.90,4.61 L-7.00,4.04 L-7.10,3.50 L-7.26,3.01 L-7.50,2.55 L-7.81,2.09 L-8.14,1.62 L-8.44,1.11 L-8.66,0.57 L-8.74,0.00 L-8.66,-0.57 L-8.44,-1.11 L-8.14,-1.62 L-7.81,-2.09 L-7.50,-2.55 L-7.26,-3.01 L-7.10,-3.50 L-7.00,-4.04 L-6.90,-4.61 L-6.76,-5.19 L-6.52,-5.72 L-6.18,-6.18 L-5.72,-6.52 L-5.19,-6.76 L-4.61,-6.90 L-4.04,-7.00 L-3.50,-7.10 L-3.01,-7.26 L-2.55,-7.50 L-2.09,-7.81 L-1.62,-8.14 L-1.11,-8.44 L-0.57,-8.66 L-0.00,-8.74 L0.57,-8.66 L1.11,-8.44 L1.62,-8.14 L2.09,-7.81 L2.55,-7.50 L3.01,-7.26 L3.50,-7.10 L4.04,-7.00 L4.61,-6.90 L5.19,-6.76 L5.72,-6.52 L6.18,-6.18 L6.52,-5.72 L6.76,-5.19 L6.90,-4.61 L7.00,-4.04 L7.10,-3.50 L7.26,-3.01 L7.50,-2.55 L7.81,-2.09 L8.14,-1.62 L8.44,-1.11 L8.66,-0.57z" fill="#e7b913"/><path d="M-3.32 0.17L-0.87 2.62L3.49 -2.36" fill="none" stroke="#1a1a1a" stroke-width="2.10" stroke-linecap="round" stroke-linejoin="round"/></svg>
<span class="t" id="it1" style="left:310px;top:927px;font-size:24.4px;letter-spacing:-0.204px;color:#141414;-webkit-text-stroke:0.25px currentColor;">Ms. Walker – Warm, Reassuring, and Round</span>
<span class="t" id="is1" style="left:310px;top:965px;font-size:20.4px;letter-spacing:0.380px;color:#5f5f5f;">Calm engaged professional female</span>
<svg class="ic" style="left:234.6px;top:1092.5px" width="58.0" height="58.0" viewBox="-29.0 -29.0 58.0 58.0"><defs><filter id="oCb" x="-50%" y="-50%" width="200%" height="200%"><feGaussianBlur stdDeviation="3.10"/></filter><clipPath id="oCc"><circle cx="0" cy="0" r="27"/></clipPath></defs><circle cx="0" cy="0" r="27" fill="#2a1080"/><g clip-path="url(#oCc)"><g filter="url(#oCb)"><ellipse cx="-17.6" cy="-18.9" rx="14.9" ry="12.2" fill="#16168a"/><ellipse cx="16.7" cy="-14.9" rx="12.2" ry="12.2" fill="#9a3ad0"/><ellipse cx="16.7" cy="-1.4" rx="13.5" ry="13.5" fill="#e614c0"/><ellipse cx="8.1" cy="8.1" rx="10.8" ry="8.1" fill="#ff12a4"/><ellipse cx="0.0" cy="22.9" rx="18.9" ry="9.4" fill="#1c0a5c"/><ellipse cx="-5.4" cy="9.4" rx="8.1" ry="8.1" fill="#3a10a8"/><ellipse cx="-14.9" cy="13.0" rx="13.5" ry="4.3" fill="#f4188e" transform="rotate(35 -14.9 13.0)"/><ellipse cx="-22.9" cy="14.9" rx="8.1" ry="8.1" fill="#7a14b0"/><ellipse cx="-13.5" cy="-2.2" rx="13.5" ry="5.9" fill="#08e4ff" transform="rotate(12 -13.5 -2.2)"/><ellipse cx="-0.5" cy="-13.5" rx="4.6" ry="13.5" fill="#18ccff" transform="rotate(22 -0.5 -13.5)"/><ellipse cx="-5.4" cy="1.4" rx="5.4" ry="4.9" fill="#08e4ff"/></g></g></svg>
<svg class="ic" style="left:270.8px;top:1119.5px;filter:drop-shadow(0 1px 2px rgba(0,0,0,.10))" width="30.4" height="30.4" viewBox="-15.2 -15.2 30.4 30.4"><circle r="11.2" fill="#fff"/><circle r="8.74" fill="#cdb9fb"/><path d="M-1.92 -2.97L3.14 0L-1.92 2.97z" fill="#1a1a2a" stroke="#1a1a2a" stroke-width="0.8" stroke-linejoin="round"/></svg>
<span class="t" id="it2" style="left:310px;top:1093px;font-size:24.4px;letter-spacing:-0.204px;color:#141414;-webkit-text-stroke:0.25px currentColor;">Ms. Walker – Warm, Reassuring, and Round</span>
<span class="t" id="is2" style="left:311px;top:1131px;font-size:20.4px;letter-spacing:0.239px;color:#5f5f5f;">Warm &amp; Caring Southern Mom</span>
<svg class="ic" style="left:234.6px;top:1192.5px" width="58.0" height="58.0" viewBox="-29.0 -29.0 58.0 58.0"><defs><filter id="oDb" x="-50%" y="-50%" width="200%" height="200%"><feGaussianBlur stdDeviation="4.05"/></filter><clipPath id="oDc"><circle cx="0" cy="0" r="27"/></clipPath></defs><circle cx="0" cy="0" r="27" fill="#5a2a20"/><g clip-path="url(#oDc)"><g filter="url(#oDb)"><ellipse cx="-13.5" cy="-16.2" rx="18.9" ry="14.9" fill="#262228"/><ellipse cx="4.0" cy="-21.6" rx="13.5" ry="8.1" fill="#3a1c1c"/><ellipse cx="-24.3" cy="2.7" rx="8.1" ry="10.8" fill="#0c8a78"/><ellipse cx="-2.7" cy="-2.7" rx="10.8" ry="10.8" fill="#b8321a"/><ellipse cx="13.5" cy="-8.1" rx="10.8" ry="9.4" fill="#f0600e"/><ellipse cx="20.2" cy="4.0" rx="10.8" ry="12.2" fill="#ff9a10"/><ellipse cx="8.1" cy="12.2" rx="12.2" ry="12.2" fill="#ffae10"/><ellipse cx="-12.2" cy="16.2" rx="12.2" ry="10.8" fill="#d6341e"/><ellipse cx="-14.9" cy="5.4" rx="6.8" ry="8.1" fill="#6a3a30"/><ellipse cx="2.7" cy="24.3" rx="13.5" ry="5.4" fill="#f07a14"/></g></g></svg>
<svg class="ic" style="left:270.8px;top:1219.5px;filter:drop-shadow(0 1px 2px rgba(0,0,0,.10))" width="30.4" height="30.4" viewBox="-15.2 -15.2 30.4 30.4"><circle r="11.2" fill="#fff"/><circle r="8.74" fill="#cdb9fb"/><path d="M-1.92 -2.97L3.14 0L-1.92 2.97z" fill="#1a1a2a" stroke="#1a1a2a" stroke-width="0.8" stroke-linejoin="round"/></svg>
<span class="t" id="it3" style="left:310px;top:1193px;font-size:24.4px;letter-spacing:-0.204px;color:#141414;-webkit-text-stroke:0.25px currentColor;">Ms. Walker – Warm, Reassuring, and Round</span>
<span class="t" id="is3" style="left:310px;top:1231px;font-size:20.4px;letter-spacing:0.380px;color:#5f5f5f;">Calm engaged professional female</span>
<svg class="ic" style="left:234.6px;top:1292.5px" width="58.0" height="58.0" viewBox="-29.0 -29.0 58.0 58.0"><defs><filter id="oEb" x="-50%" y="-50%" width="200%" height="200%"><feGaussianBlur stdDeviation="3.51"/></filter><clipPath id="oEc"><circle cx="0" cy="0" r="27"/></clipPath></defs><circle cx="0" cy="0" r="27" fill="#f2c8e0"/><g clip-path="url(#oEc)"><g filter="url(#oEb)"><ellipse cx="0.0" cy="-20.2" rx="21.6" ry="12.2" fill="#ffb6d0"/><ellipse cx="18.9" cy="-9.4" rx="12.2" ry="12.2" fill="#f6c2e2"/><ellipse cx="-18.9" cy="-4.0" rx="13.5" ry="8.1" fill="#a4f0e6" transform="rotate(10 -18.9 -4.0)"/><ellipse cx="0.0" cy="0.0" rx="13.5" ry="5.9" fill="#b4e8f2" transform="rotate(25 0.0 0.0)"/><ellipse cx="19.4" cy="2.7" rx="8.1" ry="12.2" fill="#bcd8f8"/><ellipse cx="-13.5" cy="8.1" rx="14.9" ry="4.9" fill="#fff0a0" transform="rotate(22 -13.5 8.1)"/><ellipse cx="-6.8" cy="14.9" rx="13.5" ry="4.0" fill="#ffc0a4" transform="rotate(25 -6.8 14.9)"/><ellipse cx="9.4" cy="16.2" rx="6.8" ry="9.4" fill="#a8ecf2" transform="rotate(-20 9.4 16.2)"/><ellipse cx="-5.4" cy="24.3" rx="18.9" ry="6.8" fill="#dab2f8"/><ellipse cx="-22.9" cy="14.9" rx="6.8" ry="8.1" fill="#f8c0e0"/></g></g></svg>
<svg class="ic" style="left:270.8px;top:1319.5px;filter:drop-shadow(0 1px 2px rgba(0,0,0,.10))" width="30.4" height="30.4" viewBox="-15.2 -15.2 30.4 30.4"><circle r="11.2" fill="#fff"/><circle r="8.74" fill="#cdb9fb"/><path d="M-1.92 -2.97L3.14 0L-1.92 2.97z" fill="#1a1a2a" stroke="#1a1a2a" stroke-width="0.8" stroke-linejoin="round"/></svg>
<span class="t" id="it4" style="left:310px;top:1293px;font-size:24.4px;letter-spacing:-0.204px;color:#141414;-webkit-text-stroke:0.25px currentColor;">Ms. Walker – Warm, Reassuring, and Round</span>
<span class="t" id="is4" style="left:309px;top:1331px;font-size:20.4px;letter-spacing:0.466px;color:#5f5f5f;">Mandy is a kind and sweet female voice</span>
<svg class="ic" style="left:237.5px;top:1032.5px" width="25" height="25" viewBox="0 0 24 24" fill="none" stroke="#111" stroke-width="1.6" stroke-linecap="round" stroke-linejoin="round" ><path d="M1.300 11.300v1.400" stroke="#999"/><path d="M4.700 8.500v7"/><path d="M8.200 1.500v21"/><path d="M11.700 6v12" stroke="#999"/><path d="M15.200 7.500v9"/><path d="M18.700 9.500v5" stroke="#999"/><path d="M22.300 11.300v1.400"/></svg>
<span class="t" id="d6" style="left:276px;top:1035px;font-size:20.4px;letter-spacing:0.106px;color:#5a5a5a;font-weight:700;">Default Voices</span>
<span class="t" id="d7" style="left:1467px;top:1035px;font-size:20.4px;letter-spacing:0.133px;color:#4a4a4a;font-weight:700;">View all</span>
<div class="b" style="left:205.0px;top:1371.8px;width:1371.0px;height:1.4px;background:#ebebed"></div>
<div class="b" style="left:237.0px;top:1395.5px;width:33.0px;height:32.5px;border-radius:7px;background:#f6f6f6;border:1.5px solid #ececec;"></div>
<svg class="ic" style="left:242.0px;top:1400.3px" width="23" height="23" viewBox="0 0 24 24" fill="none" stroke="#444" stroke-width="1.8" stroke-linecap="round" stroke-linejoin="round" ><path d="M12 19.500V5M5.700 11l6.300-6.300 6.300 6.300"/></svg>
<div class="b" style="left:283.5px;top:1395.5px;width:33.0px;height:32.5px;border-radius:7px;background:#f6f6f6;border:1.5px solid #ececec;"></div>
<svg class="ic" style="left:288.5px;top:1400.3px" width="23" height="23" viewBox="0 0 24 24" fill="none" stroke="#444" stroke-width="1.8" stroke-linecap="round" stroke-linejoin="round" ><path d="M12 4.500V19M5.700 13l6.300 6.300 6.300-6.300"/></svg>
<div class="b" style="left:435.2px;top:1395.5px;width:33.0px;height:32.5px;border-radius:7px;background:#f6f6f6;border:1.5px solid #ececec;"></div>
<svg class="ic" style="left:440.2px;top:1400.3px" width="23" height="23" viewBox="0 0 24 24" fill="none" stroke="#444" stroke-width="1.8" stroke-linecap="round" stroke-linejoin="round" ><path d="M18.500 6.500v5.500c0 1.100-.9 2-2 2H5.500M9.300 9.800L5.300 14l4 4.200"/></svg>
<span class="t" id="f1" style="left:329px;top:1402px;font-size:20.4px;letter-spacing:0.758px;color:#5f5f5f;">Navigate</span>
<span class="t" id="f2" style="left:481px;top:1402px;font-size:20.4px;letter-spacing:0.468px;color:#5f5f5f;">Select</span>
<span class="t" id="f3" style="left:1082px;top:1402px;font-size:20.4px;letter-spacing:0.501px;color:#555;">Not what you’re looking for? Try the</span>
<span class="t" id="f4" style="left:1427px;top:1402px;font-size:20.4px;letter-spacing:0.680px;color:#2f55d4;text-decoration:underline;text-decoration-thickness:1.3px;text-underline-offset:3px;">Help Center</span>
<svg class="ic" style="left:1622px;top:247px" width="733" height="1220" viewBox="1622 247 733 1220">
<defs>
<pattern id="gp" x="1422.04" y="216.63" width="28.333" height="28.333" patternUnits="userSpaceOnUse"><path d="M28.333 0H0V28.333" fill="none" stroke="#000" stroke-opacity=".045" stroke-width="1"/></pattern>
<radialGradient id="gmk" cx="1989" cy="440" r="1" gradientUnits="userSpaceOnUse" gradientTransform="translate(1989 440) scale(270 330) translate(-1989 -440)"><stop offset="0" stop-color="#fff"/><stop offset=".45" stop-color="#fff" stop-opacity=".8"/><stop offset="1" stop-color="#fff" stop-opacity="0"/></radialGradient>
<mask id="gm" maskUnits="userSpaceOnUse" x="1622" y="247" width="733" height="1220"><rect x="1622" y="247" width="733" height="700" fill="url(#gmk)"/></mask>
<radialGradient id="halo" cx="1988.8" cy="839.8" r="290" gradientUnits="userSpaceOnUse"><stop offset=".5" stop-color="#b4c4dc" stop-opacity=".7"/><stop offset=".56" stop-color="#c6d0e3" stop-opacity=".42"/><stop offset=".68" stop-color="#dde2ed" stop-opacity=".26"/><stop offset=".84" stop-color="#eceef4" stop-opacity=".12"/><stop offset="1" stop-color="#f4f5f9" stop-opacity="0"/></radialGradient>
<linearGradient id="rim" x1="-40" y1="-150" x2="40" y2="150" gradientUnits="userSpaceOnUse"><stop offset="0" stop-color="#c42ff9"/><stop offset=".22" stop-color="#b034f7"/><stop offset=".5" stop-color="#7c40f3"/><stop offset=".8" stop-color="#5a3af0"/><stop offset="1" stop-color="#5340ee"/></linearGradient>
<radialGradient id="core" cx="0" cy="0" r="78" gradientUnits="userSpaceOnUse"><stop offset="0" stop-color="#fff"/><stop offset=".3" stop-color="#fff"/><stop offset=".46" stop-color="#fff" stop-opacity=".8"/><stop offset=".68" stop-color="#fff" stop-opacity=".32"/><stop offset="1" stop-color="#fff" stop-opacity="0"/></radialGradient>
<radialGradient id="inrim" cx="0" cy="0" r="154.5" gradientUnits="userSpaceOnUse"><stop offset=".78" stop-color="#a9d9f2" stop-opacity="0"/><stop offset=".9" stop-color="#a9d9f2" stop-opacity=".55"/><stop offset=".96" stop-color="#a9c8f4" stop-opacity=".25"/><stop offset="1" stop-color="#a9c8f4" stop-opacity="0"/></radialGradient>
<filter id="b30" x="-60%" y="-60%" width="220%" height="220%"><feGaussianBlur stdDeviation="26"/></filter>
<filter id="b12" x="-60%" y="-60%" width="220%" height="220%"><feGaussianBlur stdDeviation="9"/></filter>
<filter id="b7" x="-60%" y="-60%" width="220%" height="220%"><feGaussianBlur stdDeviation="6"/></filter>
<filter id="b5" x="-20%" y="-20%" width="140%" height="140%"><feGaussianBlur stdDeviation="4.2"/></filter>
<clipPath id="oc"><circle cx="0" cy="0" r="154.5"/></clipPath>
<clipPath id="oc2"><circle cx="0" cy="0" r="153.5"/></clipPath>
</defs>
<g mask="url(#gm)"><rect x="1622" y="247" width="733" height="700" fill="url(#gp)"/><rect x="2130.3" y="273.3" width="28.33" height="28.33" fill="#000" opacity="0.032"/><rect x="1818.7" y="273.3" width="28.33" height="28.33" fill="#000" opacity="0.013"/><rect x="1875.3" y="301.3" width="28.33" height="28.33" fill="#000" opacity="0.032"/><rect x="2017.0" y="301.3" width="28.33" height="28.33" fill="#000" opacity="0.032"/><rect x="1733.7" y="329.5" width="28.33" height="28.33" fill="#000" opacity="0.014"/><rect x="2130.3" y="329.5" width="28.33" height="28.33" fill="#000" opacity="0.032"/><rect x="1790.3" y="357.7" width="28.33" height="28.33" fill="#000" opacity="0.022"/><rect x="1932.0" y="357.7" width="28.33" height="28.33" fill="#000" opacity="0.032"/><rect x="1875.3" y="386.0" width="28.33" height="28.33" fill="#000" opacity="0.032"/><rect x="2045.3" y="386.0" width="28.33" height="28.33" fill="#000" opacity="0.032"/><rect x="2130.3" y="386.0" width="28.33" height="28.33" fill="#000" opacity="0.029"/><rect x="1762.0" y="414.3" width="28.33" height="28.33" fill="#000" opacity="0.013"/><rect x="1960.3" y="414.3" width="28.33" height="28.33" fill="#000" opacity="0.032"/><rect x="2215.3" y="414.3" width="28.33" height="28.33" fill="#000" opacity="0.010"/><rect x="1903.7" y="442.7" width="28.33" height="28.33" fill="#000" opacity="0.032"/><rect x="2073.7" y="442.7" width="28.33" height="28.33" fill="#000" opacity="0.032"/><rect x="1847.0" y="471.0" width="28.33" height="28.33" fill="#000" opacity="0.026"/><rect x="2158.7" y="471.0" width="28.33" height="28.33" fill="#000" opacity="0.013"/><rect x="1762.0" y="499.3" width="28.33" height="28.33" fill="#000" opacity="0.013"/><rect x="1960.3" y="499.3" width="28.33" height="28.33" fill="#000" opacity="0.029"/><rect x="1903.7" y="527.7" width="28.33" height="28.33" fill="#000" opacity="0.026"/><rect x="2102.0" y="527.7" width="28.33" height="28.33" fill="#000" opacity="0.019"/><rect x="2017.0" y="556.0" width="28.33" height="28.33" fill="#000" opacity="0.026"/><rect x="1903.7" y="584.3" width="28.33" height="28.33" fill="#000" opacity="0.022"/><rect x="1818.7" y="612.7" width="28.33" height="28.33" fill="#000" opacity="0.010"/><rect x="2102.0" y="612.7" width="28.33" height="28.33" fill="#000" opacity="0.010"/></g>
<circle cx="1988.8" cy="843.8" r="290" fill="url(#halo)"/>
<g transform="translate(1988.8 839.8)">
<circle r="154.5" fill="url(#rim)"/>
<g clip-path="url(#oc2)">
<g filter="url(#b5)"><circle cx="0" cy="3.2" r="146.0" fill="#a9d3f5"/></g>
<g filter="url(#b12)"><circle cx="0" cy="2" r="127.5" fill="#5aa6f4"/></g>
<g filter="url(#b30)">
<circle cx="-56" cy="-56" r="78" fill="#7e56f2"/>
<circle cx="-92" cy="2" r="44" fill="#7660f2"/>
<circle cx="-24" cy="-100" r="40" fill="#7c6cf2"/>
<circle cx="72" cy="-66" r="52" fill="#5fb4f4"/>
<circle cx="84" cy="40" r="66" fill="#1596fa"/>
<circle cx="40" cy="96" r="56" fill="#1aa2fb"/>
<circle cx="-62" cy="82" r="46" fill="#62aef4"/>
<circle cx="6" cy="50" r="34" fill="#6ed0fc"/>
</g>
<g filter="url(#b7)"><path d="M0 -17 L128 0 L0 17z" fill="#d6c8ff" opacity="0.8" transform="rotate(-91)"/><path d="M0 -15 L104 0 L0 15z" fill="#e0eaff" opacity="0.6" transform="rotate(-30)"/><path d="M0 -17 L122 0 L0 17z" fill="#b4e4ff" opacity="0.65" transform="rotate(30)"/><path d="M0 -18 L132 0 L0 18z" fill="#9fe0ff" opacity="0.8" transform="rotate(88)"/><path d="M0 -16 L112 0 L0 16z" fill="#cfe6ff" opacity="0.65" transform="rotate(140)"/><path d="M0 -17 L122 0 L0 17z" fill="#c8b2ff" opacity="0.75" transform="rotate(-150)"/></g>
<circle r="78" fill="url(#core)"/>
<g><circle cx="-29.5" cy="59.0" r="1.8" fill="#e8e0ff" opacity="0.82"/><circle cx="81.0" cy="54.4" r="2.3" fill="#c9d96a" opacity="0.47"/><circle cx="-55.0" cy="24.3" r="0.9" fill="#d4b48a" opacity="0.48"/><circle cx="-113.8" cy="-49.6" r="1.8" fill="#bfe8ff" opacity="0.88"/><circle cx="-74.3" cy="-39.1" r="2.4" fill="#e8e0ff" opacity="0.70"/><circle cx="57.3" cy="63.6" r="1.7" fill="#bfe8ff" opacity="0.59"/><circle cx="27.5" cy="-62.4" r="1.7" fill="#e6d070" opacity="0.53"/><circle cx="87.6" cy="61.5" r="1.7" fill="#bfe8ff" opacity="0.54"/><circle cx="-36.5" cy="-78.1" r="1.3" fill="#bfe8ff" opacity="0.87"/><circle cx="-47.2" cy="55.9" r="1.1" fill="#c9d96a" opacity="0.49"/><circle cx="-48.6" cy="73.1" r="1.8" fill="#e8e0ff" opacity="0.50"/><circle cx="-96.0" cy="54.3" r="1.0" fill="#d4b48a" opacity="0.64"/><circle cx="58.9" cy="-14.3" r="1.7" fill="#f0f0ff" opacity="0.60"/><circle cx="-53.7" cy="73.8" r="2.1" fill="#e8e0ff" opacity="0.83"/><circle cx="84.3" cy="-30.5" r="1.9" fill="#e8e0ff" opacity="0.78"/><circle cx="-35.6" cy="90.5" r="1.9" fill="#d4b48a" opacity="0.58"/><circle cx="-78.2" cy="68.3" r="0.8" fill="#d4b48a" opacity="0.61"/><circle cx="-69.8" cy="-58.4" r="1.1" fill="#f0f0ff" opacity="0.51"/><circle cx="42.1" cy="-44.0" r="1.5" fill="#bfe8ff" opacity="0.58"/><circle cx="56.4" cy="65.5" r="1.7" fill="#e6d070" opacity="0.64"/><circle cx="-75.5" cy="92.7" r="2.3" fill="#c9d96a" opacity="0.49"/><circle cx="115.3" cy="8.8" r="1.1" fill="#f0f0ff" opacity="0.45"/><circle cx="-71.6" cy="40.0" r="1.7" fill="#c9d96a" opacity="0.76"/><circle cx="-99.6" cy="-9.7" r="1.9" fill="#e8e0ff" opacity="0.66"/><circle cx="85.8" cy="-90.2" r="1.9" fill="#bfe8ff" opacity="0.63"/><circle cx="-50.4" cy="37.1" r="1.8" fill="#e8e0ff" opacity="0.54"/><circle cx="86.8" cy="-8.4" r="1.0" fill="#bfe8ff" opacity="0.47"/><circle cx="66.0" cy="0.1" r="1.0" fill="#f0f0ff" opacity="0.73"/><circle cx="63.4" cy="30.0" r="1.4" fill="#e6d070" opacity="0.56"/><circle cx="-46.9" cy="66.8" r="1.0" fill="#d4b48a" opacity="0.90"/><circle cx="-88.3" cy="19.2" r="0.9" fill="#e8e0ff" opacity="0.79"/><circle cx="-5.4" cy="-89.8" r="1.9" fill="#bfe8ff" opacity="0.46"/><circle cx="89.2" cy="-28.4" r="1.0" fill="#bfe8ff" opacity="0.86"/><circle cx="3.9" cy="-76.7" r="1.8" fill="#e8e0ff" opacity="0.76"/><circle cx="-109.5" cy="-22.7" r="1.3" fill="#c9d96a" opacity="0.73"/><circle cx="26.4" cy="-107.2" r="1.1" fill="#c9d96a" opacity="0.82"/><circle cx="-4.5" cy="-71.4" r="1.6" fill="#f0f0ff" opacity="0.78"/><circle cx="112.4" cy="-7.4" r="1.6" fill="#c9d96a" opacity="0.76"/><circle cx="84.4" cy="-23.7" r="2.3" fill="#f0f0ff" opacity="0.88"/><circle cx="-46.9" cy="53.4" r="1.2" fill="#c9d96a" opacity="0.60"/><circle cx="-126.2" cy="13.8" r="1.8" fill="#e8e0ff" opacity="0.67"/><circle cx="-64.9" cy="-93.0" r="0.9" fill="#e6d070" opacity="0.50"/><circle cx="-81.8" cy="68.9" r="1.1" fill="#c9d96a" opacity="0.65"/><circle cx="-40.3" cy="-46.2" r="2.3" fill="#e6d070" opacity="0.63"/><circle cx="-101.0" cy="72.1" r="2.0" fill="#c9d96a" opacity="0.90"/><circle cx="96.7" cy="16.9" r="1.5" fill="#e6d070" opacity="0.52"/><circle cx="58.5" cy="-112.2" r="1.9" fill="#f0f0ff" opacity="0.52"/><circle cx="-54.0" cy="-16.9" r="2.1" fill="#e6d070" opacity="0.74"/><circle cx="-121.4" cy="-20.5" r="1.5" fill="#c9d96a" opacity="0.82"/><circle cx="-63.3" cy="-38.2" r="1.5" fill="#c9d96a" opacity="0.48"/><circle cx="-7.6" cy="-120.3" r="1.9" fill="#bfe8ff" opacity="0.64"/><circle cx="79.6" cy="-45.3" r="1.7" fill="#bfe8ff" opacity="0.68"/><circle cx="77.9" cy="-80.1" r="1.8" fill="#c9d96a" opacity="0.53"/><circle cx="-106.4" cy="17.9" r="1.7" fill="#f0f0ff" opacity="0.76"/><circle cx="-88.5" cy="-17.3" r="2.0" fill="#bfe8ff" opacity="0.48"/><circle cx="71.9" cy="50.7" r="0.8" fill="#e8e0ff" opacity="0.65"/><circle cx="-69.9" cy="-59.7" r="1.6" fill="#e6d070" opacity="0.57"/><circle cx="-113.8" cy="-5.8" r="1.6" fill="#c9d96a" opacity="0.76"/><circle cx="88.4" cy="-86.7" r="1.2" fill="#bfe8ff" opacity="0.85"/><circle cx="-72.4" cy="41.8" r="1.3" fill="#e6d070" opacity="0.56"/><circle cx="93.1" cy="46.1" r="2.1" fill="#c9d96a" opacity="0.87"/></g>
<path d="M32 -58L60 -110" stroke="#d09a8a" stroke-width="1.500" opacity=".6"/><path d="M-32 55L-60 100" stroke="#a8c878" stroke-width="1.500" opacity=".6"/><path d="M-66 -1L-120 -1" stroke="#e090a0" stroke-width="1.200" opacity=".45"/><path d="M76 -1L122 -1" stroke="#9cc8e0" stroke-width="1.200" opacity=".4"/>
</g>
</g>
</svg><div class="b" style="left:1908px;top:1018px;width:163px;height:41px;border-radius:20.5px;background:#fff;border:1.5px solid #ececee;box-shadow:0 1px 3px rgba(16,24,40,.08);"></div><svg class="ic" style="left:1922.5px;top:1026.0px" width="25" height="25" viewBox="0 0 24 24" fill="none" stroke="#6a42e0" stroke-width="1.5" stroke-linecap="round" stroke-linejoin="round" ><path d="M1.300 11.300v1.400" stroke="#b9a4f5"/><path d="M4.700 8.500v7"/><path d="M8.200 1.500v21"/><path d="M11.700 6v12" stroke="#b9a4f5"/><path d="M15.200 7.500v9"/><path d="M18.700 9.500v5" stroke="#b9a4f5"/><path d="M22.300 11.300v1.400"/></svg><span class="t" id="p2" style="left:1956px;top:1028px;font-size:20.4px;letter-spacing:-0.026px;color:#606060;font-weight:700;">Call Agent</span>
<span class="t" id="p1" style="left:1646px;top:272px;font-size:27.6px;letter-spacing:0.439px;color:#111827;-webkit-text-stroke:0.25px currentColor;">Model Preview</span>
</main>
</body>
</html>
